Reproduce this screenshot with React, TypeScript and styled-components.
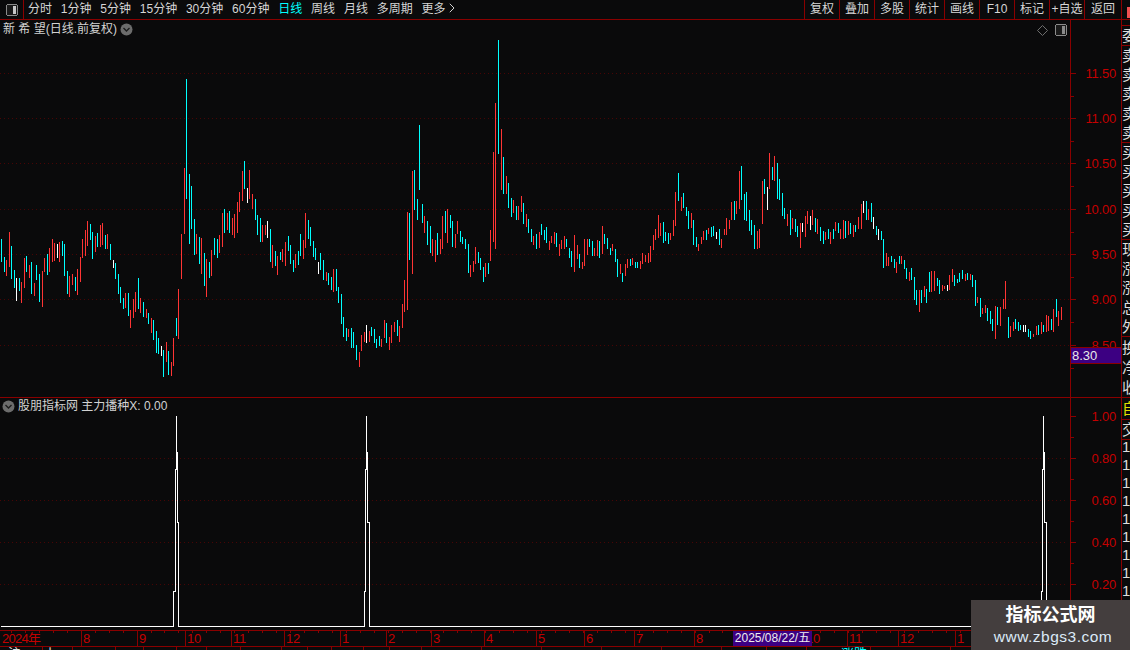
import React from "react";
import styled, { createGlobalStyle } from "styled-components";

const LINE = "#8a0000";
const BG = "#0a0a0b";
const AXIS_TEXT = "#c40000";
const FONT = '"Liberation Sans", "Noto Sans CJK SC", sans-serif';

const Global = createGlobalStyle`
  html, body { margin: 0; padding: 0; background: ${BG}; }
  body { font-family: ${FONT}; overflow: hidden; }
`;

const BARS = `
1c239-262 4c257-272 6r260-276 9r232-267 11c246-279 14c270-288 16w278-301 19c278-291 21r282-303 24r258-288 26c256-272 29r265-278
31c262-294 34r283-296 36c265-280 39c274-302 42r271-307 44r258-272 47c254-275 49r248-272 52r239-262 54r243-261 57w244-258 59r242-262
62c241-256 64c244-276 67c271-294 69r276-297 72r274-285 75c277-291 77r269-295 80r257-282 82r239-258 85r230-256 87r221-246 90c224-240
92c232-259 95r236-252 97c233-247 100r225-247 102r223-245 105c235-249 107r234-249 110c244-260 113w260-268 115c263-279 118c274-294 120c287-303
123c298-309 125r293-308 128c293-316 130r310-328 133r299-318 135r292-312 138c278-309 140r298-313 143c302-317 146r309-318 148c313-324 151r318-333
153c320-340 156c331-353 158c338-354 161w346-356 163c350-377 166r342-362 168c351-375 171r362-376 173r338-366 176c318-336 178r289-339 181r234-279
184r168-234 186c79-199 189c174-244 191c186-229 194c219-255 196r234-254 199c237-264 201r238-274 204c253-286 206r259-297 209c262-278 211r250-276
214c238-255 217c239-258 219r235-253 222r213-247 224c209-233 227r213-230 229c211-233 232r218-235 234r214-238 237r202-233 239r192-212 242r171-201
244c161-189 247w188-203 249r170-199 252r194-209 255c199-220 257c215-235 260c218-242 262r225-242 265r225-235 267w221-238 270c229-262 272r245-268
275c251-266 277r256-275 280c252-260 282r249-262 285r242-266 288c236-251 290c245-264 293c260-272 295r254-268 298c251-265 300c234-256 303r240-259
305r213-248 308c220-239 310c227-246 313c241-257 315c248-260 318w262-274 320c253-270 323c260-280 326r272-281 328c273-285 331c277-290 333r269-292
336c269-291 338c287-303 341c294-324 343c317-337 346c328-341 348r329-337 351c328-348 353c332-348 356c345-360 359r352-367 361r335-351 364r332-342
366w325-343 369r331-342 371c327-336 374c329-343 376c339-348 379c336-346 381r339-347 384r320-338 386c323-343 389r337-350 391r325-343 394r322-332
397c320-336 399r326-342 402r304-328 404r280-312 407r212-310 409c213-260 412r171-274 414c170-210 417c199-220 419c125-190 422c204-223 424r216-233
427c221-245 430c226-253 432r239-256 435r240-262 437c233-255 440r239-254 442r216-249 445c211-233 447r209-243 450c215-228 452c221-247 455r234-248
457r221-234 460c231-242 462c237-244 465c239-249 468c244-273 470r265-277 473r261-272 475r247-264 478c252-263 480c258-270 483c267-282 485r263-277
488c263-274 490r230-261 493r152-242 495r103-249 498c40-154 501r129-190 503c157-194 506r176-194 508c183-208 511c198-217 513r200-213 516c206-220
518r206-220 521r196-212 523c203-224 526r214-227 528c219-233 531c229-242 533r236-245 536c234-249 539r232-248 541c224-235 544c230-240 546c227-243
549r241-250 551r236-243 554r232-244 556c233-247 559r244-256 561r240-249 564r236-249 566c239-247 569c248-258 571c251-267 574r235-272 577r245-259
579c254-268 582r262-269 584r239-266 587r239-255 589c239-247 592c241-256 594r248-256 597r240-256 599c241-258 602r226-254 604c234-244 607c238-249
610c248-255 612r244-251 615c249-262 617c259-277 620r264-274 622c273-282 625r264-276 627r259-268 630c259-266 632r258-265 635c262-268 637c262-268
640r261-269 642r253-264 645r255-262 648r253-263 650r246-262 653r235-250 655r229-240 658r215-238 660r223-236 663c222-243 665c232-241 668c233-244
670r233-240 673r220-236 675r192-226 678c173-201 681r197-211 683c193-208 686c207-216 688c211-229 691r213-228 693c220-245 696c237-247 698r244-251
701r237-244 703r231-240 706c230-240 708r228-234 711c227-237 713c226-236 716w232-239 719c229-245 721r239-248 724r229-235 726r218-235 729r220-229
731r202-220 734c201-220 736r201-214 739r171-209 741c166-200 744c194-220 746c192-221 749c210-231 751c220-235 754c225-249 757r231-249 759r229-248
762r181-224 764c179-194 767w187-210 769r153-189 772c167-180 774r156-181 777c163-199 779c179-200 782c193-216 784c208-219 787r214-226 790c210-235
792r218-229 795c219-232 797c226-237 800r223-248 802w223-232 805r216-237 807r211-224 810w216-230 812r210-225 815c218-232 817r219-234 820c227-241
823c231-244 825r232-240 828c229-239 830r232-244 833c229-239 835r222-231 838c223-233 840r229-239 843r220-239 845c221-238 848r221-235 850c223-234
853r225-237 855c225-232 858r217-229 861r204-229 863w201-213 866c201-220 868r209-220 871c203-222 873w217-229 876c226-235 878w229-240 881c231-240
883c239-268 886r253-266 888r257-266 891c256-262 894c259-268 896r262-273 899c256-264 901r256-264 904c260-269 906c268-279 909r272-281 911c268-280
914c277-300 916c290-305 919r290-312 921c290-303 924r286-297 926c289-303 929c272-292 931r271-292 934r271-291 937c278-286 939c280-294 942r285-291
944r286-289 947w285-291 949r275-290 952r269-282 954c275-286 957c279-283 959c273-282 962c270-279 965r274-281 967c273-280 970r274-280 972c275-287
975c280-306 977r297-303 980c298-317 982r308-314 985r305-313 987c308-321 990c311-324 992c319-331 995r306-339 997c307-325 1000r307-326 1003r299-309
1005r281-309 1008c317-338 1010r326-337 1013r322-331 1015c319-329 1018c322-331 1020c325-330 1023w325-332 1025w325-332 1028c329-337 1030c331-339
1033r334-337 1036r326-335 1038c325-335 1041r322-334 1043c325-332 1046r315-332 1048r316-331 1051c319-330 1053r309-332 1056c299-317 1058r311-326 1061r307-320
`;

function barPaths() {
  const out: Record<string, string> = { c: "", r: "", w: "" };
  for (const m of BARS.matchAll(/(\d+)([crw])(\d+)-(\d+)/g)) {
    out[m[2]] += `M${Number(m[1]) + 0.5} ${m[3]}V${m[4]}`;
  }
  return out;
}

// A pulse of the indicator: left foot, peak and right foot are pixel columns.
const spike = (left: number, top: number, right: number) =>
  `H${left + 0.5}V591H${top - 0.5}V573H${top - 0.5}V469H${top + 0.5}V416V452H${top + 1.5}V522H${right + 0.5}V626.5`;

const MAIN_GRID = [73, 118, 163, 209, 254, 299, 345];
const MAIN_LABELS = ["11.50", "11.00", "10.50", "10.00", "9.50", "9.00", "8.50"];
const SUB_GRID = [458, 500, 542, 584];
const SUB_TICKS = [416, 458, 500, 542, 584];
const SUB_LABELS = ["1.00", "0.80", "0.60", "0.40", "0.20"];

const TOOL_LEFT = ["分时", "1分钟", "5分钟", "15分钟", "30分钟", "60分钟", "日线", "周线", "月线", "多周期", "更多"];
const TOOL_RIGHT = ["复权", "叠加", "多股", "统计", "画线", "F10", "标记", "+自选", "返回"];

const MONTHS: [number, string][] = [
  [0, "2024年"], [81, "8"], [137, "9"], [185, "10"], [231, "11"], [284, "12"], [340, "1"], [386, "2"],
  [431, "3"], [484, "4"], [536, "5"], [584, "6"], [634, "7"], [694, "8"], [747, ""], [804, "10"],
  [847, "11"], [898, "12"], [955, "1"], [1010, ""], [1060, ""],
];

const STATUS: { w: number; t?: string; pad?: number; accent?: boolean }[] = [
  { w: 43, t: "沪", pad: 8 }, { w: 30, t: "上", pad: 1 }, { w: 43 }, { w: 28 }, { w: 33 }, { w: 30 }, { w: 34 }, { w: 41 },
  { w: 26 }, { w: 24 }, { w: 32 }, { w: 26 }, { w: 32 }, { w: 60 }, { w: 60 }, { w: 60 }, { w: 60 }, { w: 60 }, { w: 45 },
  { w: 40 }, { w: 64, t: "涨跌", pad: 34, accent: true }, { w: 80 }, { w: 80 }, { w: 80 },
];

const SIDE_SECTIONS: { h: number; chars: string[]; tone?: string }[] = [
  { h: 20, chars: [] },
  { h: 6, chars: [] },
  { h: 20, chars: ["委"] },
  { h: 97, chars: ["卖", "卖", "卖", "卖", "卖"] },
  { h: 97, chars: ["买", "买", "买", "买", "买"] },
  { h: 97, chars: ["现", "涨", "涨", "总", "外"] },
  { h: 61, chars: ["换", "净", "收"] },
  { h: 22, chars: ["自"], tone: "#e0e000" },
  { h: 20, chars: ["交"] },
];
const SIDE_DIGITS = ["1", "1", "1", "1", "1", "1", "1", "1", "1"];

const Page = styled.div`
  position: relative;
  display: flex;
  width: 1130px;
  height: 650px;
  overflow: hidden;
  background: ${BG};
`;
const Workspace = styled.div`
  display: flex;
  flex-direction: column;
  width: 1121px;
  height: 650px;
`;
const Toolbar = styled.div`
  display: flex;
  justify-content: space-between;
  flex: 0 0 20px;
  box-sizing: border-box;
  border-bottom: 1px solid ${LINE};
  color: #d6d6d6;
  font-size: 12px;
  line-height: 19px;
`;
const ToolGroup = styled.div`
  display: flex;
  align-items: center;
`;
const LayoutCell = styled.div`
  display: flex;
  align-items: center;
  justify-content: center;
  width: 23px;
  height: 19px;
  border-right: 1px solid ${LINE};
  margin-right: 4px;
`;
const ToolItem = styled.span<{ $active?: boolean }>`
  margin-right: 8.8px;
  white-space: nowrap;
  color: ${(p) => (p.$active ? "#00ffff" : "inherit")};
`;
const ToolButton = styled.div`
  width: 34px;
  height: 19px;
  border-left: 1px solid ${LINE};
  text-align: center;
  white-space: nowrap;
  &:last-child { width: 36px; }
`;
const Pane = styled.div<{ $h: number; $top?: boolean }>`
  display: flex;
  flex: 0 0 ${(p) => p.$h}px;
  box-sizing: border-box;
  border-top: ${(p) => (p.$top ? `1px solid ${LINE}` : "none")};
`;
const ChartArea = styled.div`
  position: relative;
  width: 1070px;
  overflow: hidden;
`;
const ChartSvg = styled.svg`
  display: block;
  width: 1070px;
  height: 100%;
`;
const PaneTitle = styled.div<{ $left: number; $top: number }>`
  position: absolute;
  display: flex;
  align-items: center;
  left: ${(p) => p.$left}px;
  top: ${(p) => p.$top}px;
  gap: 3px;
  color: #d2d2d2;
  font-size: 12px;
  line-height: 16px;
  white-space: pre;
`;
const ChartTools = styled.div`
  position: absolute;
  top: 4px;
  right: 3px;
  display: flex;
  align-items: center;
  gap: 7px;
`;
const Axis = styled.div`
  position: relative;
  width: 51px;
  box-sizing: border-box;
  border-left: 1px solid ${LINE};
  overflow: hidden;
`;
const AxisSvg = styled.svg`
  position: absolute;
  left: 0;
  top: 0;
  width: 8px;
  height: 100%;
`;
const AxisLabel = styled.div<{ $y: number }>`
  position: absolute;
  right: 5px;
  top: ${(p) => p.$y - 8}px;
  color: ${AXIS_TEXT};
  font-size: 13px;
  line-height: 16px;
  letter-spacing: -0.2px;
`;
const PriceTag = styled.div`
  position: absolute;
  left: 0;
  right: 0;
  top: 327px;
  height: 15px;
  border-top: 1px solid ${LINE};
  border-bottom: 1px solid ${LINE};
  padding-left: 1px;
  background: #3c0082;
  color: #e8e8e8;
  font-size: 13px;
  line-height: 15px;
`;
const TimeAxis = styled.div`
  position: relative;
  display: flex;
  flex: 0 0 17px;
  box-sizing: border-box;
  border-top: 1px solid ${LINE};
  border-bottom: 1px solid ${LINE};
  overflow: hidden;
`;
const TimeCell = styled.div`
  box-sizing: border-box;
  flex: none;
  padding-left: 1px;
  border-left: 1px solid ${LINE};
  color: ${AXIS_TEXT};
  font-size: 13px;
  line-height: 15px;
  letter-spacing: -0.3px;
  white-space: nowrap;
  &:first-of-type { border-left: none; padding-left: 2px; letter-spacing: -0.7px; }
`;
const TimeTicks = styled.svg`
  position: absolute;
  left: 0;
  top: 0;
  width: 1121px;
  height: 3px;
`;
const DateTag = styled.div`
  position: absolute;
  left: 733px;
  top: 0;
  width: 79px;
  height: 15px;
  background: #3c0082;
  color: #eeeeee;
  font-size: 12px;
  line-height: 15px;
  text-align: center;
  white-space: nowrap;
`;
const StatusBar = styled.div`
  display: flex;
  flex: 0 0 3px;
  overflow: hidden;
`;
const StatusCell = styled.div<{ $accent?: boolean; $pad?: number }>`
  box-sizing: border-box;
  flex: none;
  height: 14px;
  padding-left: ${(p) => p.$pad ?? 0}px;
  border-right: 1px solid ${LINE};
  color: ${(p) => (p.$accent ? "#00ffff" : "#e0e0e0")};
  font-size: 13px;
  line-height: 13px;
  white-space: nowrap;
`;
const SideRail = styled.div`
  display: flex;
  flex-direction: column;
  width: 9px;
  box-sizing: border-box;
  border-left: 1px solid ${LINE};
  overflow: hidden;
`;
const SideSection = styled.div<{ $h: number; $tone?: string }>`
  position: relative;
  display: flex;
  flex-direction: column;
  justify-content: space-around;
  flex: 0 0 ${(p) => p.$h}px;
  box-sizing: border-box;
  border-bottom: 1px solid ${LINE};
  color: ${(p) => p.$tone ?? "#dedede"};
  font-size: 15px;
  line-height: 15px;
  overflow: hidden;
`;
const SideChar = styled.span`
  display: block;
  white-space: nowrap;
`;
const SideDigits = styled.div`
  margin-top: -2px;
  color: #dedede;
  font-size: 15px;
  line-height: 18px;
`;
const RedMark = styled.div`
  position: absolute;
  right: 0;
  top: 7px;
  width: 3px;
  height: 11px;
  background: #f05050;
`;
const Watermark = styled.div`
  position: absolute;
  left: 971px;
  top: 600px;
  width: 159px;
  height: 50px;
  display: flex;
  flex-direction: column;
  align-items: center;
  background: #443e3e;
`;
const WatermarkTitle = styled.div`
  margin-top: 4px;
  color: #ffffff;
  font-size: 18px;
  font-weight: 700;
  line-height: 23px;
`;
const WatermarkUrl = styled.div`
  margin-left: 5px;
  color: #dceaf8;
  font-size: 15.5px;
  line-height: 19px;
  letter-spacing: 0.5px;
`;

const Chevron = () => (
  <svg width="13" height="13" viewBox="0 0 13 13">
    <circle cx="6.5" cy="6.5" r="6" fill="#6c6c6c" />
    <path d="M3.5 5 L6.5 8 L9.5 5" fill="none" stroke="#1c1c1c" strokeWidth="1.4" />
  </svg>
);
const LayoutIcon = ({ bright }: { bright?: boolean }) => (
  <svg width="12" height="12" viewBox="0 0 12 12" shapeRendering="crispEdges">
    <rect x="0.5" y="0.5" width="11" height="11" rx="2" fill="#1a1a1a" stroke="#8a8a8a" />
    <rect x="7" y="2" width="3" height="8" fill={bright ? "#c8c8c8" : "#8a8a8a"} />
  </svg>
);
const Diamond = () => (
  <svg width="11" height="11" viewBox="0 0 11 11">
    <path d="M5.5 0.5 L10.5 5.5 L5.5 10.5 L0.5 5.5 Z" fill="none" stroke="#6e6e6e" />
  </svg>
);
const ChevronRight = () => (
  <svg width="6" height="10" viewBox="0 0 6 10" style={{ marginLeft: 3 }}>
    <path d="M0.8 0.8 L5 5 L0.8 9.2" fill="none" stroke="#d0d0d0" />
  </svg>
);

const GRID = "#480505";

export default function App() {
  const bars = barPaths();
  const weekTicks = Array.from({ length: 80 }, (_, i) => 11 + i * 13.95);
  return (
    <Page>
      <Global />
      <Workspace>
        <Toolbar>
          <ToolGroup>
            <LayoutCell>
              <LayoutIcon bright />
            </LayoutCell>
            {TOOL_LEFT.map((t) => (
              <ToolItem key={t} $active={t === "日线"}>
                {t}
                {t === "更多" && <ChevronRight />}
              </ToolItem>
            ))}
          </ToolGroup>
          <ToolGroup>
            {TOOL_RIGHT.map((t) => (
              <ToolButton key={t}>{t}</ToolButton>
            ))}
          </ToolGroup>
        </Toolbar>

        <Pane $h={377}>
          <ChartArea>
            <ChartSvg viewBox="0 20 1070 377" shapeRendering="crispEdges">
              {MAIN_GRID.map((y) => (
                <path key={y} d={`M0 ${y + 0.5}H1070`} stroke={GRID} strokeDasharray="1 3" />
              ))}
              <path d={bars.r} stroke="#ff3434" fill="none" />
              <path d={bars.c} stroke="#00ffff" fill="none" />
              <path d={bars.w} stroke="#ffffff" fill="none" />
            </ChartSvg>
            <PaneTitle $left={3} $top={1}>
              新 希 望(日线.前复权)
              <Chevron />
            </PaneTitle>
            <ChartTools>
              <Diamond />
              <LayoutIcon />
            </ChartTools>
          </ChartArea>
          <Axis>
            <AxisSvg viewBox="0 20 8 377" preserveAspectRatio="none" shapeRendering="crispEdges">
              {MAIN_GRID.map((y) => (
                <path key={y} d={`M0 ${y + 0.5}H5M0 ${y + 23.5}H3`} stroke={LINE} />
              ))}
            </AxisSvg>
            {MAIN_LABELS.map((t, i) => (
              <AxisLabel key={t} $y={MAIN_GRID[i] - 19}>
                {t}
              </AxisLabel>
            ))}
            <PriceTag>8.30</PriceTag>
          </Axis>
        </Pane>

        <Pane $h={233} $top>
          <ChartArea>
            <ChartSvg viewBox="0 398 1070 232" shapeRendering="crispEdges">
              {SUB_GRID.map((y) => (
                <path key={y} d={`M0 ${y + 0.5}H1066`} stroke={GRID} strokeDasharray="1 3" />
              ))}
              <path
                d={`M1 626.5${spike(173, 176, 178)}${spike(364, 366, 369)}${spike(1041, 1043, 1046)}`}
                stroke="#ffffff"
                fill="none"
              />
            </ChartSvg>
            <PaneTitle $left={2} $top={0}>
              <Chevron />
              股朋指标网 主力播种X: 0.00
            </PaneTitle>
          </ChartArea>
          <Axis>
            <AxisSvg viewBox="0 398 8 232" preserveAspectRatio="none" shapeRendering="crispEdges">
              {SUB_TICKS.map((y) => (
                <path key={y} d={`M0 ${y + 0.5}H5M0 ${y + 21.5}H3`} stroke={LINE} />
              ))}
            </AxisSvg>
            {SUB_LABELS.map((t, i) => (
              <AxisLabel key={t} $y={SUB_TICKS[i] - 397}>
                {t}
              </AxisLabel>
            ))}
          </Axis>
        </Pane>

        <TimeAxis>
          {MONTHS.map(([x, label], i) => (
            <TimeCell key={i} style={{ width: (MONTHS[i + 1]?.[0] ?? 1121) - x }}>
              {label}
            </TimeCell>
          ))}
          <TimeTicks viewBox="0 0 1121 3" shapeRendering="crispEdges">
            {weekTicks.map((x) => (
              <path key={x} d={`M${Math.round(x) + 0.5} 0V2`} stroke={LINE} />
            ))}
          </TimeTicks>
          <DateTag>2025/08/22/五</DateTag>
        </TimeAxis>

        <StatusBar>
          {STATUS.map((c, i) => (
            <StatusCell key={i} $accent={c.accent} $pad={c.pad} style={{ width: c.w }}>
              {c.t}
            </StatusCell>
          ))}
        </StatusBar>
      </Workspace>

      <SideRail>
        {SIDE_SECTIONS.map((s, i) => (
          <SideSection key={i} $h={s.h} $tone={s.tone}>
            {i === 0 && <RedMark />}
            {s.chars.map((c, j) => (
              <SideChar key={j}>{c}</SideChar>
            ))}
          </SideSection>
        ))}
        <SideDigits>
          {SIDE_DIGITS.map((c, j) => (
            <SideChar key={j}>{c}</SideChar>
          ))}
        </SideDigits>
      </SideRail>

      <Watermark>
        <WatermarkTitle>指标公式网</WatermarkTitle>
        <WatermarkUrl>www.zbgs3.com</WatermarkUrl>
      </Watermark>
    </Page>
  );
}
